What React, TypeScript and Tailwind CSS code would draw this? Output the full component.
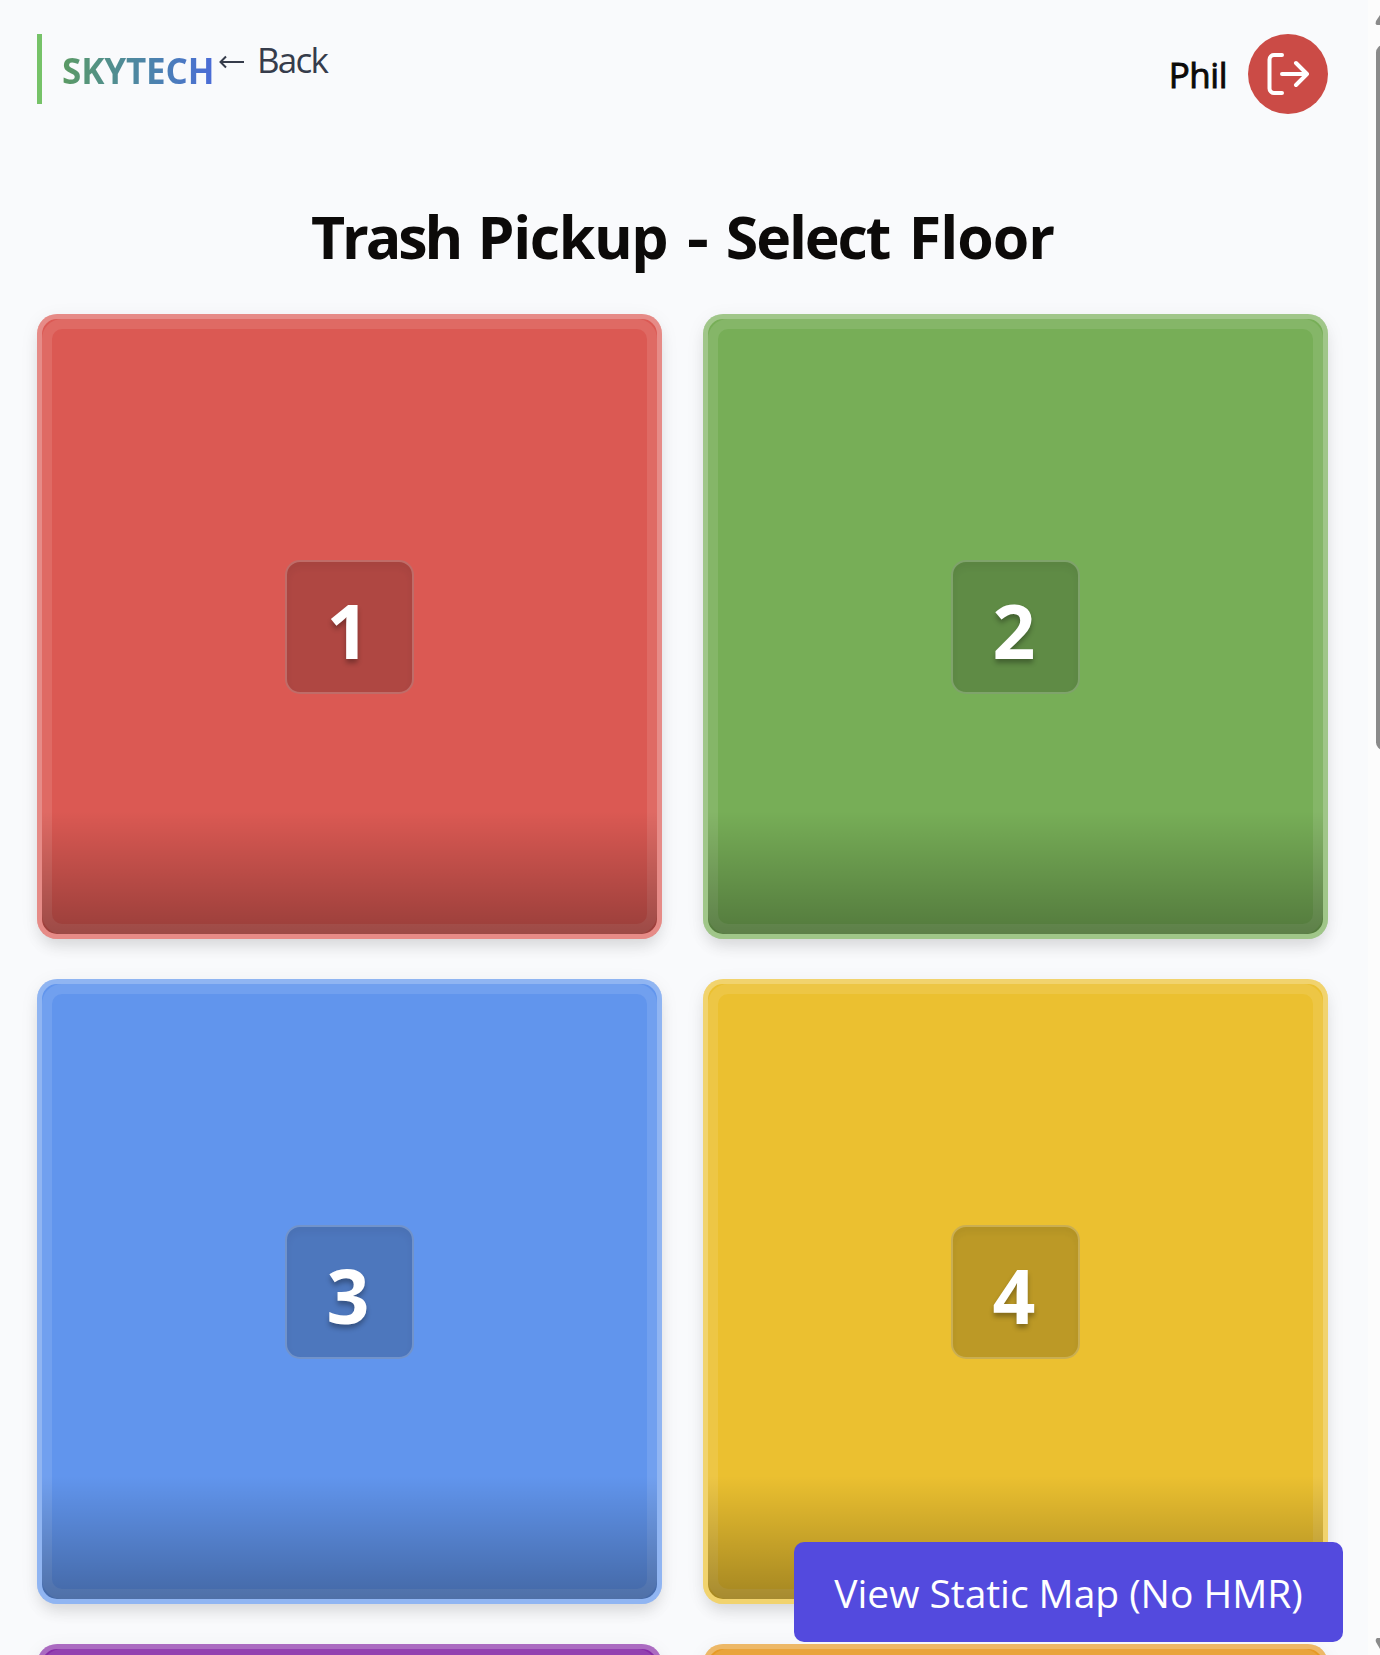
type Floor = { label?: string; color: string };

const floors: Floor[] = [
  { label: '1', color: 'bg-[#db5953]' },
  { label: '2', color: 'bg-[#77ae57]' },
  { label: '3', color: 'bg-[#6195ed]' },
  { label: '4', color: 'bg-[#ebc030]' },
  { color: 'bg-[#872ca7]' },
  { color: 'bg-[#e69a26]' },
];

function FloorCard({ label, color }: Floor) {
  return (
    <button
      className={`relative flex h-[625px] items-center justify-center rounded-[20px] shadow-[0_10px_15px_-3px_rgba(0,0,0,0.1),0_4px_20px_rgba(0,0,0,0.06)] ${color}`}
    >
      <span className="absolute inset-[5px] rounded-[20px] border-[10px] border-white/10" />
      <span className="absolute inset-[5px] rounded-[15px] bg-linear-to-t from-black/30 to-transparent to-20%" />
      <span className="absolute inset-0 rounded-[20px] border-[5px] border-white/30" />
      {label && (
        <span className="relative right-[0.5px] flex h-[134px] w-[129px] items-center justify-center rounded-[15px] border-2 border-white/20 bg-black/20 pt-[7px] pr-[2px] text-[75px] font-bold text-white shadow-[inset_0_5px_10px_rgba(0,0,0,0.06)] [text-shadow:0_4px_5px_rgba(0,0,0,0.3)]">
          {label}
        </span>
      )}
    </button>
  );
}

function Scrollbar() {
  return (
    <div className="absolute top-0 right-0 h-full w-[12px] overflow-hidden bg-[#fcfcfc]">
      <svg className="absolute top-[14px] left-[7px]" width="22" height="12" fill="#8a8a8a">
        <path d="M2 11Q0 11 1 7L5 1L20 -12V11Z" />
      </svg>
      <div className="absolute top-[45px] left-2 h-[705px] w-[15px] rounded-[8px] bg-[#8a8a8a]" />
      <svg className="absolute bottom-[5px] left-[7px]" width="22" height="12" fill="#8a8a8a">
        <path d="M2 0Q0 1 1 4L5 11L20 24V0Z" />
      </svg>
    </div>
  );
}

export default function App() {
  return (
    <div className="relative h-[1655px] w-[1380px] overflow-hidden bg-[#f9fafc] pr-[52px] pl-[37px] font-['Open_Sans',sans-serif] text-[#0c0a09]">
      <header className="flex h-[148px] items-start justify-between pt-[34px]">
        <div className="flex items-start">
          <div className="flex h-[70px] items-center border-l-[5px] border-[#76c268] pl-5">
            <span className="w-[152px] bg-linear-to-r from-[#5b9a62] to-[#4b6bd8] bg-clip-text pt-[3px] text-[35px] leading-[50px] font-bold tracking-[-0.15px] whitespace-nowrap text-transparent">
              SKYTECH
            </span>
          </div>
          <a className="flex items-center pl-[5px] text-[35px] leading-[51px] tracking-[-1.8px] text-[#363c4b]">
            <svg className="mt-1 mr-3" width="26" height="14" fill="none" stroke="currentColor" strokeWidth="2">
              <path d="M25 7H2M7 1.5L1.5 7L7 12.5" />
            </svg>
            Back
          </a>
        </div>
        <div className="flex items-center">
          <span className="mr-[21px] pt-[2px] text-[35px] leading-[78px] tracking-[-0.5px] [-webkit-text-stroke:0.9px_currentColor]">
            Phil
          </span>
          <button className="flex h-20 w-20 items-center justify-center rounded-full bg-[#cb4b46]">
            <svg width="44" height="44" viewBox="0 0 44 44" fill="none" stroke="white" strokeWidth="4" strokeLinecap="round" strokeLinejoin="round">
              <path d="M16 3H8a4.5 4.5 0 0 0-4.5 4.5V36.5a4.5 4.5 0 0 0 4.5 4.5H16M16 22H41M30 11L41 22L30 33" />
            </svg>
          </button>
        </div>
      </header>
      <h1 className="mt-[47px] h-[119px] text-center text-[59px] leading-[82px] font-bold tracking-[-1.4px] whitespace-nowrap [word-spacing:5.5px]">
        <span className="mr-[-2px] tracking-[-3.1px]">Trash</span> Pickup{' '}
        <span className="inline-block origin-left scale-x-115 pr-[2px]">-</span>{' '}
        <span className="tracking-[-2.1px]">Select</span> <span className="tracking-[-1px]">Floor</span>
      </h1>
      <main className="grid grid-cols-2 gap-x-[41px] gap-y-10">
        {floors.map((floor, index) => (
          <FloorCard key={index} {...floor} />
        ))}
      </main>
      <button className="absolute right-[37px] bottom-[13px] flex h-[100px] w-[549px] items-center justify-center rounded-[10px] bg-[#534ade] pt-[2px] text-[39px] tracking-[-0.05px] whitespace-nowrap text-white">
        View Static Map (No HMR)
      </button>
      <Scrollbar />
    </div>
  );
}
